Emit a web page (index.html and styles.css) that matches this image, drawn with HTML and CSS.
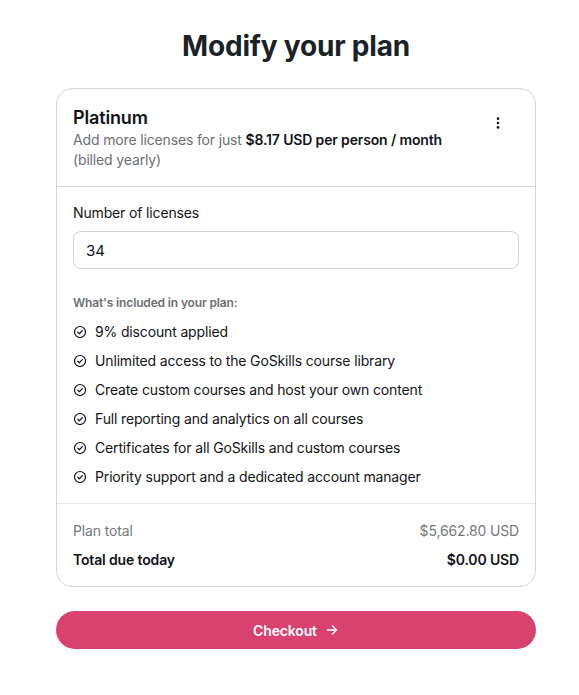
FILE: index.html
```html
<!DOCTYPE html>
<html lang="en">
<head>
    <meta charset="UTF-8">
    <meta name="viewport" content="width=device-width, initial-scale=1.0">
    <title>Modify your plan</title>
    <link rel="stylesheet" href="styles.css">
</head>
<body>
    <div class="page">
        <h1>Modify your plan</h1>

        <div class="card">
            <div class="card-header">
                <div>
                    <h2>Platinum</h2>
                    <p class="subtitle">Add more licenses for just <strong>$8.17 USD per person / month</strong><br>(billed yearly)</p>
                </div>
                <button class="menu" aria-label="More options">
                    <svg width="16" height="16" viewBox="0 0 16 16"><circle cx="8" cy="3" r="1.5"/><circle cx="8" cy="8" r="1.5"/><circle cx="8" cy="13" r="1.5"/></svg>
                </button>
            </div>

            <div class="card-body">
                <label for="licenses">Number of licenses</label>
                <input id="licenses" type="text" value="34">

                <h3>What's included in your plan:</h3>
                <ul class="features">
                    <li><svg viewBox="0 0 16 16"><circle cx="8" cy="8" r="6.3"/><path d="M5.4 8.2l1.8 1.8 3.5-3.6"/></svg>9% discount applied</li>
                    <li><svg viewBox="0 0 16 16"><circle cx="8" cy="8" r="6.3"/><path d="M5.4 8.2l1.8 1.8 3.5-3.6"/></svg>Unlimited access to the GoSkills course library</li>
                    <li><svg viewBox="0 0 16 16"><circle cx="8" cy="8" r="6.3"/><path d="M5.4 8.2l1.8 1.8 3.5-3.6"/></svg>Create custom courses and host your own content</li>
                    <li><svg viewBox="0 0 16 16"><circle cx="8" cy="8" r="6.3"/><path d="M5.4 8.2l1.8 1.8 3.5-3.6"/></svg>Full reporting and analytics on all courses</li>
                    <li><svg viewBox="0 0 16 16"><circle cx="8" cy="8" r="6.3"/><path d="M5.4 8.2l1.8 1.8 3.5-3.6"/></svg>Certificates for all GoSkills and custom courses</li>
                    <li><svg viewBox="0 0 16 16"><circle cx="8" cy="8" r="6.3"/><path d="M5.4 8.2l1.8 1.8 3.5-3.6"/></svg>Priority support and a dedicated account manager</li>
                </ul>
            </div>

            <div class="card-footer">
                <div class="row muted">
                    <span>Plan total</span>
                    <span>$5,662.80 USD</span>
                </div>
                <div class="row total">
                    <span>Total due today</span>
                    <span>$0.00 USD</span>
                </div>
            </div>
        </div>

        <button class="checkout">Checkout
            <svg width="14" height="14" viewBox="0 0 14 14"><path d="M2.5 7h9M7.5 3l4 4-4 4"/></svg>
        </button>
    </div>
</body>
</html>
```

FILE: styles.css
```css
* {
    margin: 0;
    padding: 0;
    box-sizing: border-box;
}

body {
    font-family: Inter, 'Noto Sans', sans-serif;
    background: #ffffff;
    color: #111418;
    letter-spacing: -0.15px;
}

.page {
    width: 480px;
    margin-left: 56px;
    padding-top: 28px;
}

h1 {
    font-size: 28px;
    line-height: 36px;
    font-weight: 700;
    text-align: center;
    color: #1b2226;
    letter-spacing: -0.2px;
    margin-bottom: 24px;
}

.card {
    border: 1px solid #d6d6d6;
    border-radius: 16px;
}

.card-header {
    display: flex;
    justify-content: space-between;
    align-items: flex-start;
    padding: 17px 16px 16px;
    border-bottom: 1px solid #d6d6d6;
}

.card-header h2 {
    font-size: 18px;
    line-height: 24px;
    font-weight: 600;
}

.subtitle {
    font-size: 14px;
    line-height: 20px;
    color: #6b6f73;
}

.subtitle strong {
    color: #111418;
    font-weight: 600;
}

.menu {
    background: none;
    border: none;
    width: 24px;
    height: 24px;
    margin-top: 5px;
    margin-right: 9px;
    display: flex;
    align-items: center;
    justify-content: center;
}

.menu svg {
    fill: #111418;
    width: 14px;
    height: 14px;
}

.card-body {
    padding: 16px;
    border-bottom: 1px solid #e8e8e8;
}

label {
    display: block;
    font-size: 14px;
    line-height: 20px;
    margin-bottom: 8px;
}

input {
    width: 100%;
    height: 38px;
    border: 1px solid #d1d4d7;
    border-radius: 8px;
    padding: 0 12px;
    font-family: inherit;
    font-size: 15px;
    color: #111418;
}

.card-body h3 {
    font-size: 12px;
    line-height: 16px;
    font-weight: 600;
    color: #6b6f73;
    margin-top: 26px;
}

.features {
    list-style: none;
    display: flex;
    flex-direction: column;
    gap: 9px;
    margin-top: 11px;
}

.features li {
    display: flex;
    align-items: center;
    gap: 8px;
    font-size: 14px;
    line-height: 20px;
}

.features svg {
    width: 14px;
    height: 14px;
    fill: none;
    stroke: #111418;
    stroke-width: 1.4;
    stroke-linecap: round;
    stroke-linejoin: round;
    flex-shrink: 0;
}

.card-footer {
    padding: 17px 16px 16px;
    display: flex;
    flex-direction: column;
    gap: 9px;
}

.row {
    display: flex;
    justify-content: space-between;
    font-size: 14px;
    line-height: 20px;
}

.row.muted {
    color: #75797d;
}

.row.total {
    font-weight: 600;
}

.checkout {
    width: 100%;
    height: 38px;
    margin-top: 24px;
    border: none;
    border-radius: 19px;
    background: #d9416f;
    color: #ffffff;
    font-family: inherit;
    font-size: 14px;
    font-weight: 600;
    letter-spacing: -0.15px;
    display: flex;
    align-items: center;
    justify-content: center;
    gap: 8px;
}

.checkout svg {
    fill: none;
    stroke: #ffffff;
    stroke-width: 1.5;
    stroke-linecap: round;
    stroke-linejoin: round;
}
```
